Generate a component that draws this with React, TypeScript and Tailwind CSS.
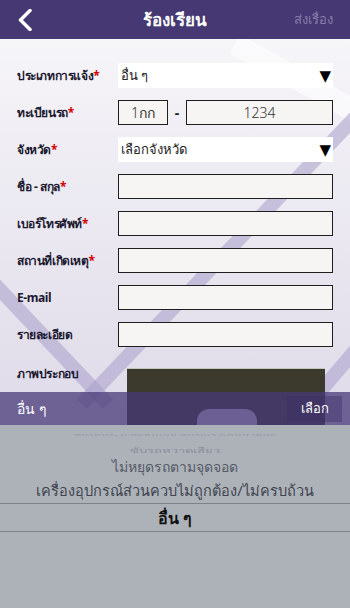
import React from 'react'

const font = { fontFamily: '"Noto Sans", "DejaVu Sans", sans-serif' }

function Req({ children }: { children: React.ReactNode }) {
    return (
        <span>
            {children}
            <span className="text-[#d40000]">*</span>
        </span>
    )
}

function Row({ label, children }: { label: React.ReactNode; children: React.ReactNode }) {
    return (
        <div className="flex items-center h-[25px]">
            <div className="w-[101px] text-[12px] tracking-[-0.4px] font-bold text-[#1b1830] leading-none whitespace-nowrap">{label}</div>
            <div className="w-[215px] h-full">{children}</div>
        </div>
    )
}

function Select({ value }: { value: string }) {
    return (
        <div className="h-full bg-white flex items-center justify-between pl-[3px] pr-[2px]">
            <span className="text-[13px] text-[#222] leading-none">{value}</span>
            <span className="text-[15px] text-black leading-none">▼</span>
        </div>
    )
}

function Input({ value, center }: { value?: string; center?: boolean }) {
    return (
        <div className={`h-full border-[1.5px] border-[#1e1e1e] bg-[#f6f5f4] flex items-center ${center ? 'justify-center' : ''}`}>
            {value && <span className="text-[14px] font-light text-[#333] leading-none">{value}</span>}
        </div>
    )
}

export default function App() {
    return (
        <div className="w-[350px] h-[608px] relative overflow-hidden flex flex-col" style={font}>
            {/* Header */}
            <div className="h-[39px] bg-[#463872] flex items-center px-[17px] shrink-0">
                <div className="flex-1">
                    <svg width="14" height="22" viewBox="0 0 14 22" className="ml-[1px]">
                        <polyline points="12,1.5 2.5,11 12,20.5" fill="none" stroke="white" strokeWidth="3.5" strokeLinecap="round" strokeLinejoin="round" />
                    </svg>
                </div>
                <span className="text-white font-bold text-[17px] leading-none">ร้องเรียน</span>
                <div className="flex-1 flex justify-end">
                    <span className="text-[#877cab] text-[13px] leading-none">ส่งเรื่อง</span>
                </div>
            </div>

            {/* Body */}
            <div className="relative flex-1 bg-gradient-to-b from-[#f6f5f8] to-[#d3cee1]">
                <svg className="absolute inset-0" width="350" height="569" viewBox="0 0 350 569">
                    <line x1="235" y1="5" x2="360" y2="75" stroke="white" strokeWidth="22" opacity="0.6" />
                    <line x1="365" y1="68" x2="82" y2="365" stroke="#a99fcb" strokeWidth="14" opacity="0.55" />
                    <line x1="-12" y1="238" x2="108" y2="365" stroke="#a99fcb" strokeWidth="14" opacity="0.55" />
                    <line x1="365" y1="300" x2="312" y2="362" stroke="#a99fcb" strokeWidth="14" opacity="0.55" />
                </svg>

                <div className="relative pt-[24px] pl-[17px] flex flex-col gap-[12px]">
                    <Row label={<Req>ประเภทการแจ้ง</Req>}>
                        <Select value="อื่น ๆ" />
                    </Row>
                    <Row label={<Req>ทะเบียนรถ</Req>}>
                        <div className="flex items-center h-full">
                            <div className="w-[50px] h-full">
                                <Input value="1กก" center />
                            </div>
                            <span className="w-[18px] text-center text-[14px] font-bold text-[#222] leading-none">-</span>
                            <div className="flex-1 h-full">
                                <Input value="1234" center />
                            </div>
                        </div>
                    </Row>
                    <Row label={<Req>จังหวัด</Req>}>
                        <Select value="เลือกจังหวัด" />
                    </Row>
                    <Row label={<Req>ชื่อ - สกุล</Req>}>
                        <Input />
                    </Row>
                    <Row label={<Req>เบอร์โทรศัพท์</Req>}>
                        <Input />
                    </Row>
                    <Row label={<Req>สถานที่เกิดเหตุ</Req>}>
                        <Input />
                    </Row>
                    <Row label="E-mail">
                        <Input />
                    </Row>
                    <Row label="รายละเอียด">
                        <Input />
                    </Row>
                    <div className="flex items-start mt-[9px]">
                        <div className="w-[110px] text-[12px] tracking-[-0.4px] font-bold text-[#1b1830] leading-none">ภาพประกอบ</div>
                        <div className="relative w-[198px] h-[120px] bg-[#3b3a2c] border-t border-white/70">
                            <div className="absolute left-[70px] top-[40px] w-[60px] h-[40px] rounded-t-[12px] bg-[#d5d0e3]" />
                        </div>
                    </div>
                </div>
            </div>

            {/* Bottom picker overlay */}
            <div className="absolute left-0 right-0 bottom-0 h-[216px] flex flex-col">
                <div className="h-[33px] bg-[#483a78]/75 flex items-center justify-between pl-[17px] pr-[8px]">
                    <span className="text-white text-[14px] leading-none">อื่น ๆ</span>
                    <div className="h-[26px] w-[55px] bg-[#3a2d63]/40 flex items-center justify-center">
                        <span className="text-white text-[13px] leading-none">เลือก</span>
                    </div>
                </div>
                <div className="flex-1 bg-[#adb2b9] flex flex-col items-center">
                    <div className="h-[20px] w-full flex items-center justify-center overflow-hidden">
                        <span className="text-[11px] text-[#979ca6] leading-none scale-y-[0.18] whitespace-nowrap">ขับรถประมาทเลินเล่อ ขับรถเร็วเกินกำหนด</span>
                    </div>
                    <div className="h-[11px] w-full flex items-center justify-center overflow-hidden">
                        <span className="text-[13px] text-[#8a8f99] leading-none scale-y-[0.55]">ขับรถหวาดเสียว</span>
                    </div>
                    <div className="h-[22px] flex items-center">
                        <span className="text-[14px] text-[#555a66] leading-none">ไม่หยุดรถตามจุดจอด</span>
                    </div>
                    <div className="h-[25px] flex items-center">
                        <span className="text-[14.5px] text-[#3f4450] leading-none">เครื่องอุปกรณ์ส่วนควบไม่ถูกต้อง/ไม่ครบถ้วน</span>
                    </div>
                    <div className="w-full h-[29px] border-y border-[#7e8289] flex items-center justify-center">
                        <span className="text-[16px] font-bold text-[#111] leading-none">อื่น ๆ</span>
                    </div>
                </div>
            </div>
        </div>
    )
}
